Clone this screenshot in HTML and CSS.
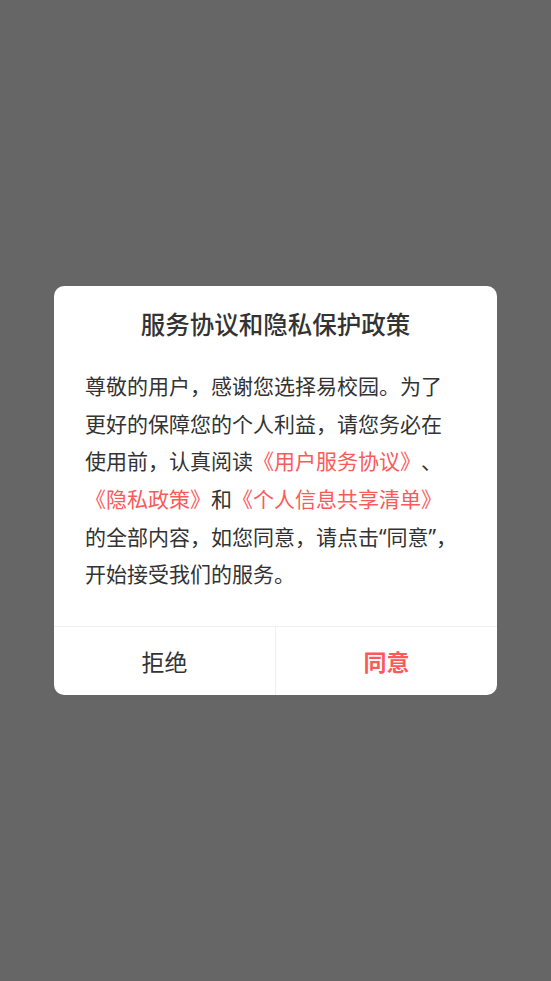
FILE: index.html
```html
<!DOCTYPE html>
<html lang="zh-CN">
<head>
<meta charset="utf-8">
<title>服务协议和隐私保护政策</title>
<link rel="stylesheet" href="styles.css">
</head>
<body>
<div class="mask">
  <div class="dialog">
    <div class="title">服务协议和隐私保护政策</div>
    <div class="content">尊敬的用户，感谢您选择易校园。为了更好的保障您的个人利益，请您务必在使用前，认真阅读<span class="link">《用户服务协议》</span>、<span class="link">《隐私政策》</span>和<span class="link">《个人信息共享清单》</span>的全部内容，如您同意，请点击“同意”，开始接受我们的服务。</div>
    <div class="actions">
      <div class="btn btn-reject">拒绝</div>
      <div class="btn btn-agree">同意</div>
    </div>
  </div>
</div>
</body>
</html>
```
FILE: styles.css
```css
html, body {
  margin: 0;
  padding: 0;
  height: 100%;
}
body {
  background: #666666;
  font-family: "Noto Sans", "Noto Sans CJK SC", sans-serif;
  color: #333333;
  text-spacing-trim: space-all;
}
.mask {
  height: 100%;
  display: flex;
  align-items: center;
  justify-content: center;
}
.dialog {
  width: 443px;
  background: #ffffff;
  border-radius: 10px;
  overflow: hidden;
}
.title {
  padding-top: 22px;
  font-size: 24.5px;
  line-height: 34px;
  font-weight: 500;
  text-align: center;
  color: #333333;
}
.content {
  padding: 26px 36px 32px 31px;
  font-size: 21px;
  line-height: 37.7px;
  color: #333333;
}
.link {
  color: #fa5a5a;
}
.actions {
  display: flex;
  border-top: 1px solid #f0f0f0;
}
.btn {
  flex: 1;
  height: 68px;
  display: flex;
  align-items: center;
  justify-content: center;
  font-size: 23px;
}
.btn-reject {
  color: #333333;
}
.btn-agree {
  color: #fa5a5a;
  font-weight: 700;
  border-left: 1px solid #f0f0f0;
}
```
